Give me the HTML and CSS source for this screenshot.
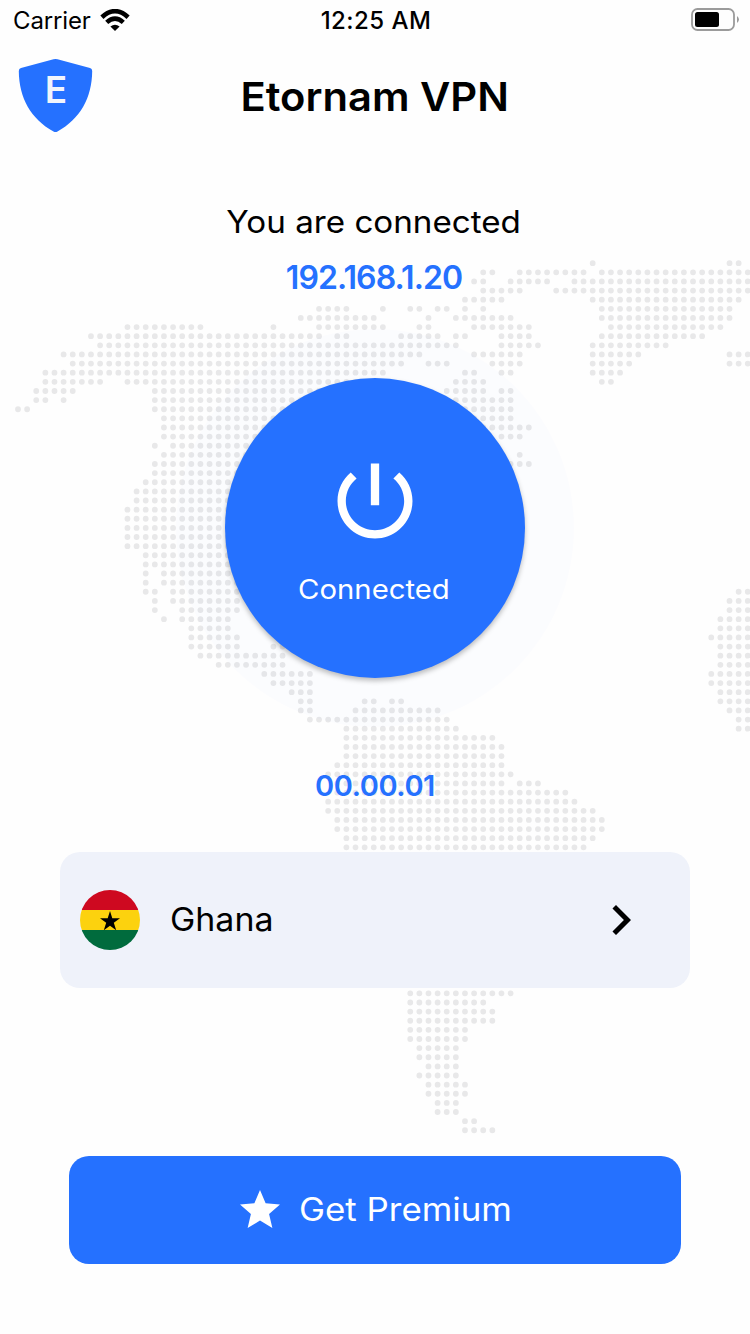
FILE: index.html
```html
<!DOCTYPE html>
<html lang="en">
<head>
<meta charset="utf-8">
<title>Etornam VPN</title>
<link rel="stylesheet" href="styles.css">
</head>
<body>
<main class="screen">
  <svg class="map" viewBox="0 0 750 1334" aria-hidden="true"><path id="map-dots"/></svg>

  <div class="status">
    <div class="status-left">
      <span class="carrier">Carrier</span>
      <svg class="wifi" viewBox="0 0 30 22">
        <path d="M15 22 10.4 17.6Q15 14 19.6 17.600Z"/>
        <path class="arc" d="M1.900 8.200Q15-3.800 28.100 8.200M6.700 13.400Q15 6 23.300 13.400"/>
      </svg>
    </div>
    <span class="time">12:25 AM</span>
    <svg class="battery" viewBox="0 0 48 24">
      <rect class="case" x="1" y="1" width="42" height="21" rx="5.5"/>
      <rect x="4" y="4" width="24" height="15" rx="2.5"/>
      <path class="nub" d="M46 8Q50 11.5 46 15Z"/>
    </svg>
  </div>

  <header class="header">
    <svg class="shield" viewBox="0 0 76 76">
      <path d="M35.500 1.200Q37.500.6 39.500 1.200L72 10Q74.200 10.700 74.200 13C74 40 62 61 39.500 73.500Q37.500 74.600 35.500 73.500C13 61 1 40 .8 13Q.8 10.700 3 10Z"/>
      <text x="26.800" y="45">E</text>
    </svg>
    <h1 class="title"><span>Etornam VPN</span></h1>
  </header>

  <section class="connection">
    <p class="message"><span>You are connected</span></p>
    <p class="address"><span>192.168.1.20</span></p>
    <div class="halo">
      <button class="power">
        <svg class="power-icon" viewBox="0 0 24 24"><path d="M13 3h-2v10h2V3zm4.830 2.170l-1.420 1.420C17.990 7.860 19 9.810 19 12c0 3.870-3.130 7-7 7s-7-3.130-7-7c0-2.190 1.010-4.140 2.580-5.420L6.170 5.170C4.230 6.820 3 9.260 3 12c0 4.970 4.030 9 9 9s9-4.030 9-9c0-2.740-1.230-5.180-3.170-6.830z"/></svg>
        <span class="power-label">Connected</span>
      </button>
    </div>
    <p class="timer"><span>00.00.01</span></p>
  </section>

  <div class="country">
    <svg class="flag" viewBox="0 0 60 60">
      <clipPath id="disc"><circle cx="30" cy="30" r="30"/></clipPath>
      <g clip-path="url(#disc)">
        <path fill="#ce0920" d="M0 0h60v20H0z"/>
        <path fill="#fcd20e" d="M0 20h60v20H0z"/>
        <path fill="#006b3d" d="M0 40h60v20H0z"/>
      </g>
      <path d="M30 21l2.300 7.200H40l-6.200 4.600 2.400 7.400L30 35.700l-6.200 4.500 2.400-7.400L20 28.200h7.700z"/>
    </svg>
    <span class="country-name">Ghana</span>
    <svg class="chevron" viewBox="0 0 24 24"><path d="M10 6L8.590 7.410 13.170 12l-4.580 4.590L10 18l6-6z"/></svg>
  </div>

  <button class="premium">
    <svg class="star" viewBox="0 0 24 24"><path d="M12 17.270L18.180 21l-1.640-7.030L22 9.240l-7.190-.61L12 2 9.190 8.630 2 9.240l5.460 4.730L5.820 21z"/></svg>
    <span class="premium-label">Get Premium</span>
  </button>
</main>
<script src="map.js"></script>
</body>
</html>
```

FILE: styles.css
```css
* { box-sizing: border-box; margin: 0; padding: 0; }
body {
  width: 750px;
  height: 1334px;
  overflow: hidden;
  background: #fefefe;
  color: #000;
  font-family: Inter, "Liberation Sans", sans-serif;
}
button { border: 0; font: inherit; color: #fff; background: #2571ff; }
svg { display: block; flex: none; }
span { display: inline-block; white-space: nowrap; }

.screen {
  position: relative;
  display: flex;
  flex-direction: column;
  height: 1334px;
}
.screen > * { position: relative; }
.screen > .map {
  position: absolute;
  inset: 0;
  width: 750px;
  height: 1334px;
}
.map path {
  fill: none;
  stroke: #e8e8e9;
  stroke-width: 5.8;
  stroke-linecap: round;
}

.status {
  display: grid;
  grid-template-columns: 1fr auto 1fr;
  align-items: center;
  height: 40px;
  padding: 0 11px 0 13px;
  font-size: 24px;
}
.status-left { display: flex; align-items: center; gap: 9px; }
.carrier { letter-spacing: -0.15px; }
.time { font-weight: 500; letter-spacing: 0.45px; }
.wifi { width: 30px; height: 22px; }
.wifi .arc { fill: none; stroke: #000; stroke-width: 4.6; }
.battery { width: 48px; height: 24px; justify-self: end; }
.battery .case { fill: none; stroke: #9b9b9b; stroke-width: 1.8; }
.battery .nub { fill: #9b9b9b; }

.header {
  display: grid;
  grid-template-columns: 76px 1fr 76px;
  align-items: center;
  height: 112px;
  padding: 0 18px;
}
.shield { width: 76px; height: 76px; fill: #2571ff; }
.shield text { font-size: 37px; font-weight: 600; fill: #f2f5fc; }
.title { font-size: 40px; font-weight: 600; text-align: center; }
.title span { transform: scaleX(1.043); }

.connection {
  display: flex;
  flex-direction: column;
  align-items: center;
  height: 700px;
  padding-top: 49px;
}
.message { font-size: 31px; line-height: 42px; }
.message span { transform: translateX(-1px) scaleX(1.07); }
.address {
  margin-top: 14px;
  font-size: 32px;
  line-height: 42px;
  font-weight: 600;
  letter-spacing: -0.9px;
  color: #2571ff;
}
.address span { transform: translateX(-1px); }
.halo {
  display: flex;
  align-items: center;
  justify-content: center;
  width: 398px;
  height: 398px;
  margin-top: 30px;
  border-radius: 50%;
  background: rgba(37, 113, 255, 0.01);
}
.power {
  display: flex;
  flex-direction: column;
  align-items: center;
  width: 300px;
  height: 300px;
  padding-top: 73px;
  border-radius: 50%;
  box-shadow: 0 3px 5px rgba(0, 0, 0, 0.25);
}
.power-icon { width: 100px; height: 100px; fill: #fff; }
.power-label {
  margin-top: 21px;
  font-size: 27px;
  line-height: 36px;
  transform: translateX(-1px) scaleX(1.085);
}
.timer {
  margin-top: 38px;
  font-size: 29px;
  line-height: 42px;
  font-weight: 600;
  letter-spacing: -0.4px;
  color: #2571ff;
}

.country {
  display: flex;
  align-items: center;
  height: 136px;
  margin: 0 60px;
  padding: 0 39px 0 20px;
  border-radius: 20px;
  background: #eff2fa;
}
.flag { width: 60px; height: 60px; }
.country-name {
  flex: 1;
  margin: 0 0 2px 30px;
  font-size: 32px;
  transform: scaleX(1.06);
  transform-origin: left;
}
.chevron { width: 60px; height: 60px; }

.premium {
  display: flex;
  align-items: center;
  height: 108px;
  margin: 168px 69px 0;
  padding-left: 167px;
  border-radius: 20px;
}
.star { width: 48px; height: 48px; fill: #fff; }
.premium-label {
  margin: 0 0 2px 15px;
  font-size: 32px;
  transform: scaleX(1.09);
  transform-origin: left;
}
```

FILE: map.js
```javascript
// Each entry is a grid row followed by its first/last dotted columns.
const rows = [
  [0, 63,63, 78,79],
  [1, 51,52, 55,62, 64,80],
  [2, 50,51, 54,58, 61,80],
  [3, 51,55, 59,80],
  [4, 49,53, 63,79],
  [5, 33,36, 40,40, 43,44, 46,47, 49,49, 51,51, 64,78],
  [6, 31,39, 45,45, 48,54, 64,78],
  [7, 12,20, 28,28, 33,40, 44,45, 50,56, 65,77],
  [8, 8,33, 35,36, 42,46, 48,49, 53,56, 64,75],
  [9, 9,48, 53,57, 63,71],
  [10, 5,44, 50,55, 63,68, 78,80],
  [11, 6,42, 45,47, 52,55, 63,67, 78,80],
  [12, 3,40, 49,50, 53,54, 63,66],
  [13, 3,9, 12,38, 48,51, 64,65],
  [14, 2,6, 15,36, 47,51, 53,54],
  [15, 2,3, 5,5, 15,36, 48,54],
  [16, 0,1, 15,36, 49,54],
  [17, 16,36, 50,54],
  [18, 16,36, 51,56],
  [19, 16,36, 53,55],
  [20, 15,15, 17,36],
  [21, 16,36, 55,55],
  [22, 15,36, 54,56],
  [23, 15,36], [24, 14,36], [25, 13,36], [26, 13,36],
  [27, 12,36], [28, 12,36], [29, 12,36], [30, 12,36], [31, 12,36],
  [32, 14,36], [33, 14,36],
  [34, 14,14, 16,36],
  [35, 14,14, 16,26],
  [36, 14,15, 17,24, 79,80],
  [37, 15,15, 17,24, 78,80],
  [38, 15,15, 18,24, 78,80],
  [39, 16,16, 18,23, 77,80],
  [40, 19,23, 77,80],
  [41, 19,24, 76,80],
  [42, 19,24, 28,29, 77,80],
  [43, 20,29, 77,80],
  [44, 22,29, 77,80],
  [45, 27,32, 76,80],
  [46, 28,32, 76,80],
  [47, 30,32, 77,80],
  [48, 31,32, 38,39, 41,42, 77,80],
  [49, 31,32, 37,46, 78,80],
  [50, 32,47, 79,80],
  [51, 36,48, 79,80],
  [52, 36,52], [53, 36,53], [54, 36,53], [55, 35,53], [56, 34,54],
  [57, 35,53, 55,57],
  [58, 35,60], [59, 34,61], [60, 34,63], [61, 35,64], [62, 35,64],
  [63, 36,63], [64, 36,62],
  [80, 43,54], [81, 43,51], [82, 43,52], [83, 43,52], [84, 43,49], [85, 43,49],
  [86, 44,48], [87, 44,48], [88, 45,48], [89, 44,48], [90, 45,49], [91, 45,49],
  [92, 46,48], [93, 46,48], [94, 49,50], [95, 49,52]
];
let d = "";
for (const [row, ...spans] of rows) {
  const y = (263.2 + row * 9.127).toFixed(2);
  for (let i = 0; i < spans.length; i += 2) {
    for (let col = spans[i]; col <= spans[i + 1]; col++) {
      d += `M${(18 + col * 9.122).toFixed(2)} ${y}h0`;
    }
  }
}
document.getElementById("map-dots").setAttribute("d", d);
```
